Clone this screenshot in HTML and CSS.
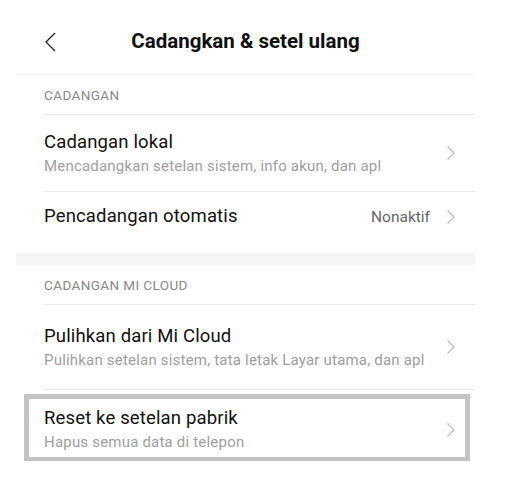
FILE: index.html
```html
<!DOCTYPE html>
<html lang="id">
<head>
    <meta charset="UTF-8">
    <meta name="viewport" content="width=device-width, initial-scale=1.0">
    <title>Cadangkan &amp; setel ulang</title>
    <link rel="stylesheet" href="styles.css">
</head>
<body>
    <div class="screen">
        <!-- Top bar -->
        <div class="top-bar">
            <svg class="back" width="12" height="20" viewBox="0 0 12 20">
                <path d="M11 1 L2 10 L11 19" fill="none" stroke="#222" stroke-width="1.3"/>
            </svg>
            <h1>Cadangkan &amp; setel ulang</h1>
        </div>

        <!-- Local backup -->
        <div class="section-label">CADANGAN</div>
        <div class="item">
            <div class="item-text">
                <div class="item-title">Cadangan lokal</div>
                <div class="item-sub">Mencadangkan setelan sistem, info akun, dan apl</div>
            </div>
            <svg class="chev" width="10" height="16" viewBox="0 0 10 16"><path d="M1.5 1.5 L8 8 L1.5 14.5" fill="none" stroke="#bbb" stroke-width="1.2"/></svg>
        </div>
        <div class="item single">
            <div class="item-text">
                <div class="item-title">Pencadangan otomatis</div>
            </div>
            <span class="value">Nonaktif</span>
            <svg class="chev" width="10" height="16" viewBox="0 0 10 16"><path d="M1.5 1.5 L8 8 L1.5 14.5" fill="none" stroke="#bbb" stroke-width="1.2"/></svg>
        </div>

        <div class="gap"></div>

        <!-- Mi Cloud -->
        <div class="section-label">CADANGAN MI CLOUD</div>
        <div class="item cloud">
            <div class="item-text">
                <div class="item-title">Pulihkan dari Mi Cloud</div>
                <div class="item-sub">Pulihkan setelan sistem, tata letak Layar utama, dan apl</div>
            </div>
            <svg class="chev" width="10" height="16" viewBox="0 0 10 16"><path d="M1.5 1.5 L8 8 L1.5 14.5" fill="none" stroke="#bbb" stroke-width="1.2"/></svg>
        </div>

        <div class="item reset">
            <div class="item-text">
                <div class="item-title">Reset ke setelan pabrik</div>
                <div class="item-sub">Hapus semua data di telepon</div>
            </div>
            <svg class="chev" width="10" height="16" viewBox="0 0 10 16"><path d="M1.5 1.5 L8 8 L1.5 14.5" fill="none" stroke="#bbb" stroke-width="1.2"/></svg>
        </div>
    </div>
</body>
</html>
```

FILE: styles.css
```css
/* Settings screen */
body {
    margin: 0;
    padding: 0;
    background: #fff;
    font-family: Roboto, "Liberation Sans", sans-serif;
    color: #1a1a1a;
}

.screen {
    width: 459px;
    margin-left: 16px;
}

.top-bar {
    height: 74px;
    display: flex;
    align-items: center;
    justify-content: center;
    position: relative;
    border-bottom: 1px solid #f0f0f0;
}

.top-bar .back {
    position: absolute;
    left: 28px;
    top: 32px;
}

.top-bar h1 {
    margin: 0;
    font-size: 20.5px;
    font-weight: 700;
    color: #111;
    padding-top: 8px;
}

.section-label {
    margin-left: 28px;
    height: 39px;
    display: flex;
    align-items: center;
    font-size: 13.5px;
    letter-spacing: 0.4px;
    color: #8a8a8a;
    border-bottom: 1px solid #ececec;
}

.item {
    margin-left: 28px;
    display: flex;
    align-items: center;
    height: 76px;
    border-bottom: 1px solid #ececec;
}

.item.single {
    height: 61px;
    box-sizing: border-box;
    padding-bottom: 12px;
    border-bottom: none;
}

.item.cloud {
    height: 84px;
}

.item-text {
    flex: 1;
}

.item-title {
    font-size: 18.5px;
    line-height: 23px;
    letter-spacing: 0.15px;
    color: #111;
}

.item-sub {
    margin-top: 2px;
    font-size: 15px;
    line-height: 20px;
    letter-spacing: 0.2px;
    color: #a0a0a0;
}

.value {
    font-size: 15.5px;
    color: #666;
    margin-right: 16px;
}

.chev {
    margin-right: 19px;
}

.gap {
    height: 12px;
    background: #f5f5f5;
}

.item.reset {
    margin: 4px 5px 0 8px;
    padding: 3px 0 0 15px;
    height: 55px;
    border: 5px solid #c4c4c4;
    border-bottom-width: 4px;
}

.item.reset .chev {
    margin-right: 9px;
}
```
